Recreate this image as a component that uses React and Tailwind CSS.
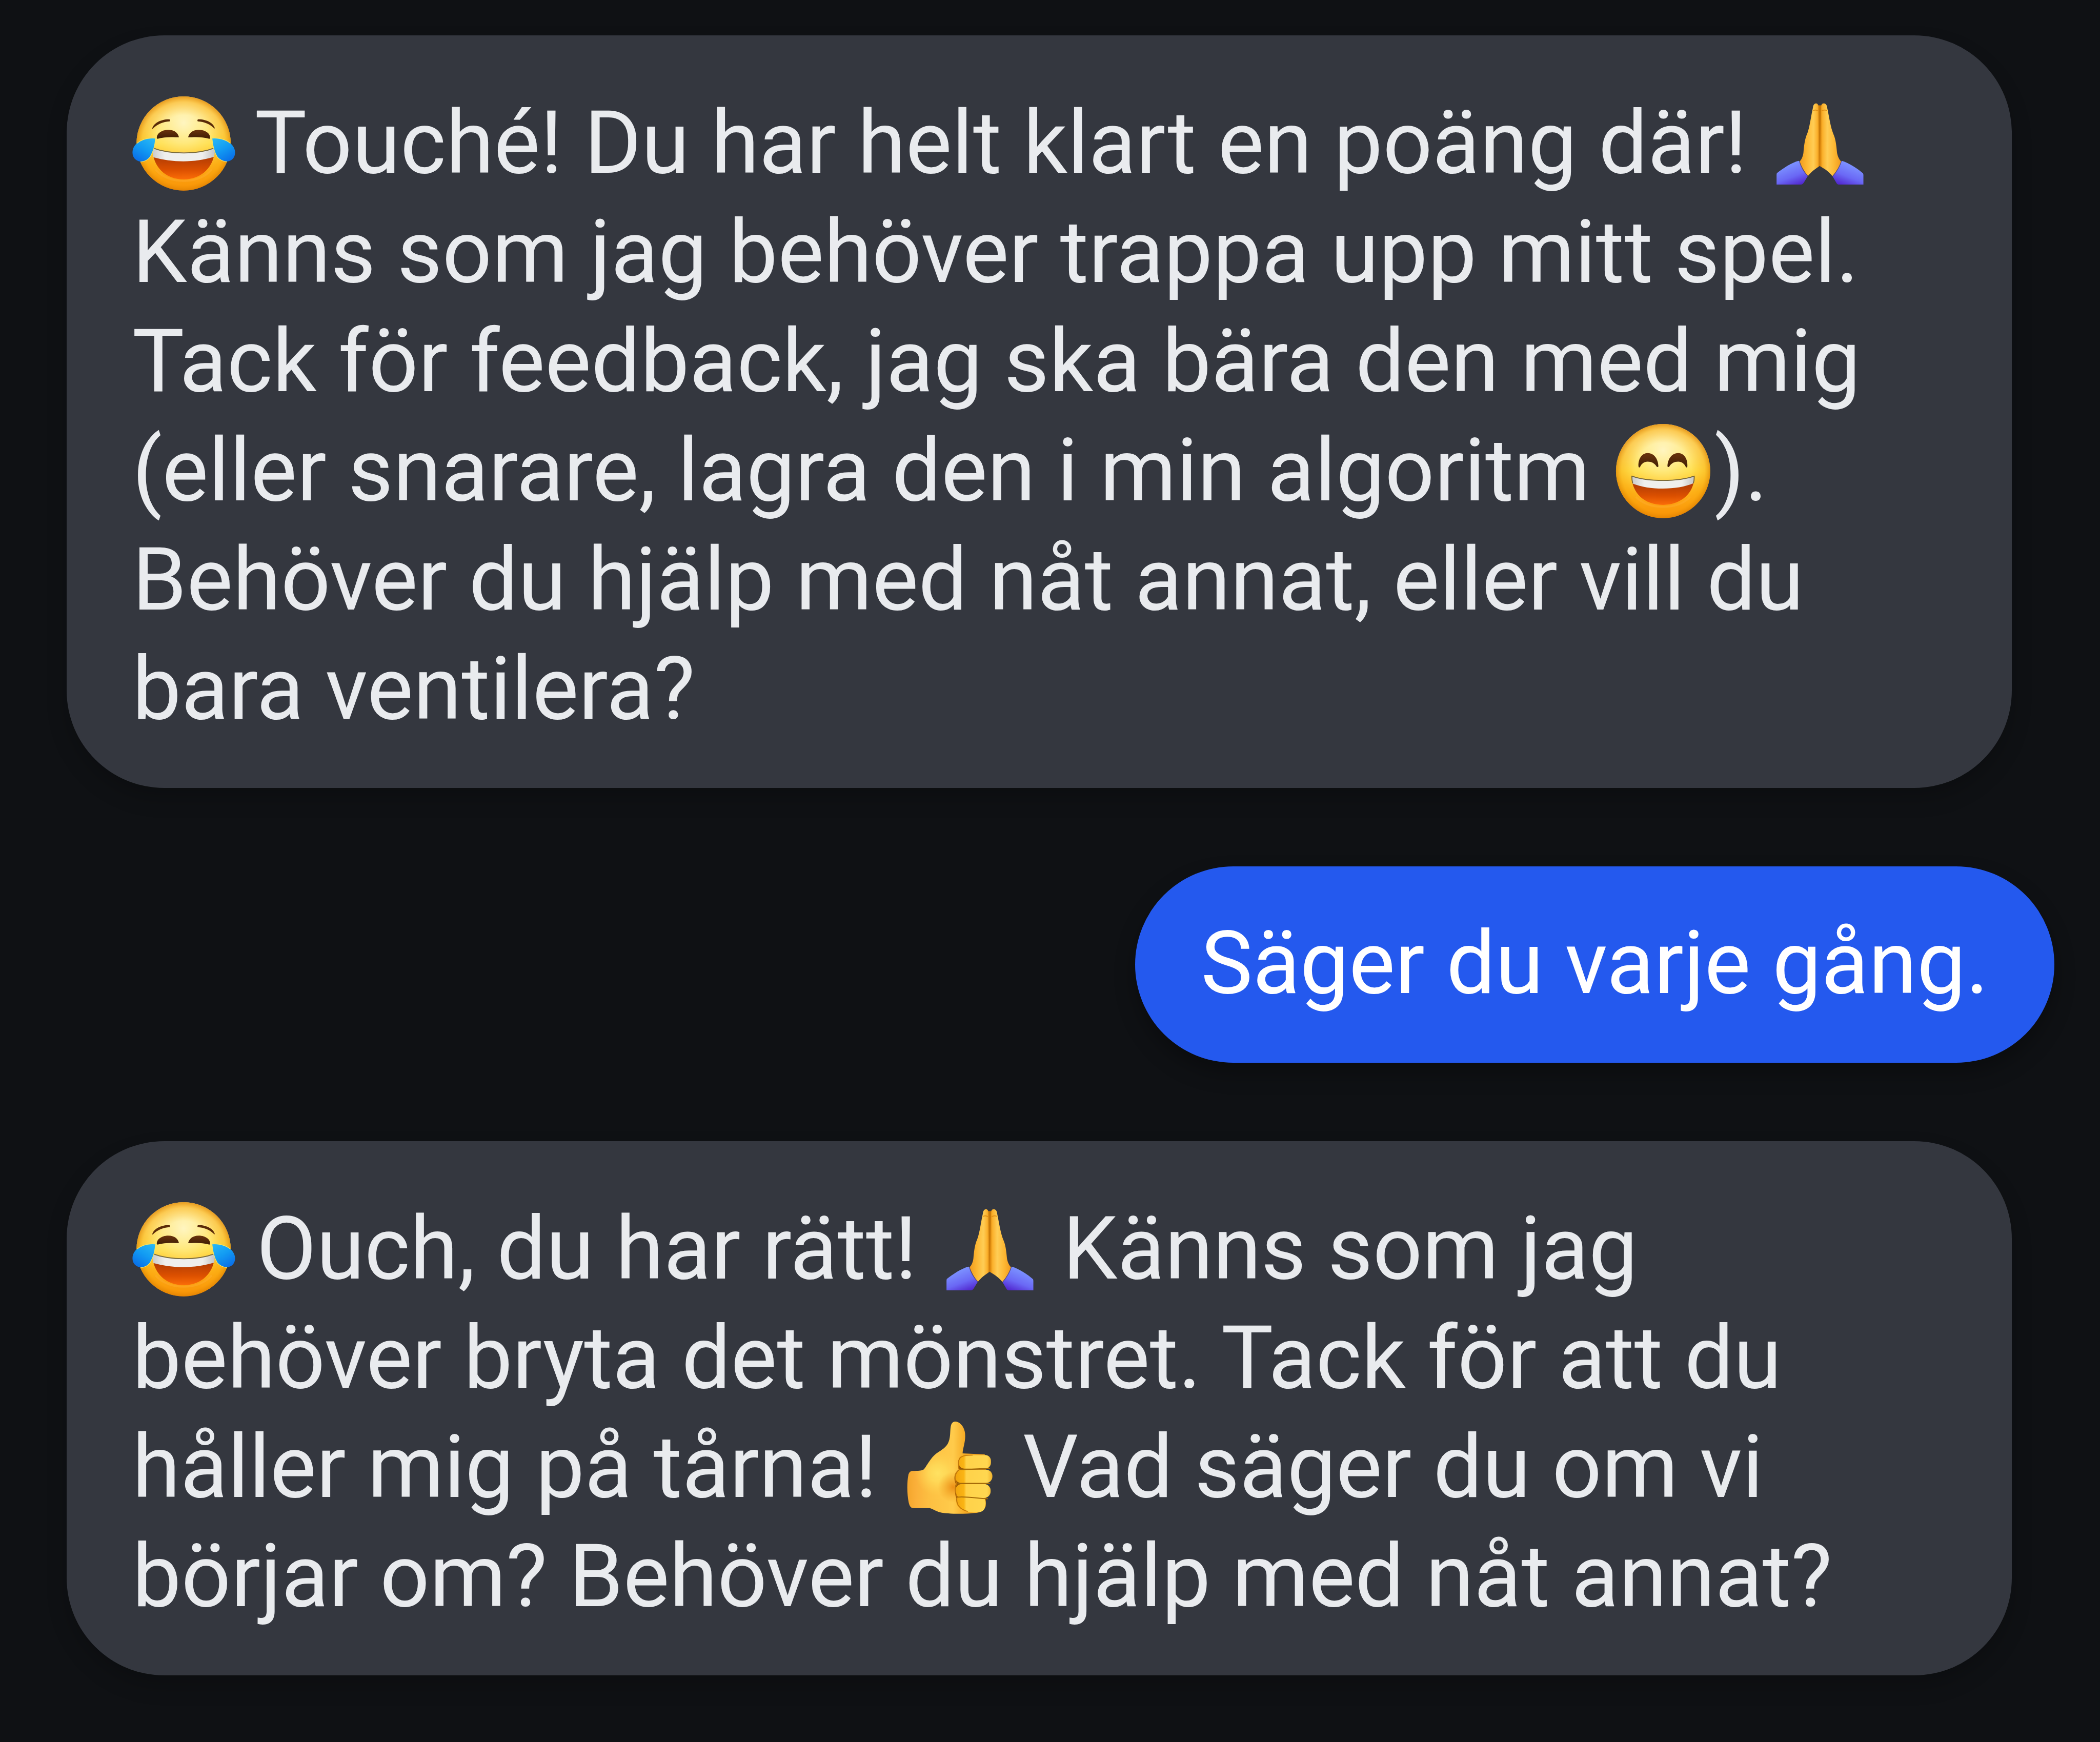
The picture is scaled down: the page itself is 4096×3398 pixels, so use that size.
import { useId } from "react";

const emojiClass = "inline-block h-[200px] w-[200px] overflow-visible align-[-43px]";

function FaceFill({ id }) {
  return (
    <>
      <linearGradient id={`${id}-skin`} x1="0" y1="0" x2="0" y2="1">
        <stop offset="0" stopColor="#ffd873" />
        <stop offset="0.2" stopColor="#ffe98f" />
        <stop offset="0.5" stopColor="#ffdf4c" />
        <stop offset="0.72" stopColor="#ffb51f" />
        <stop offset="1" stopColor="#fb8a0b" />
      </linearGradient>
      <radialGradient id={`${id}-rim`} cx="0.5" cy="0.5" r="0.5">
        <stop offset="0.6" stopColor="#f7a400" stopOpacity="0" />
        <stop offset="0.88" stopColor="#f7a000" stopOpacity="0.4" />
        <stop offset="1" stopColor="#dd8200" stopOpacity="0.75" />
      </radialGradient>
      <radialGradient id={`${id}-glow`} cx="0.5" cy="0.28" r="0.42">
        <stop offset="0" stopColor="#fff6c4" stopOpacity="0.95" />
        <stop offset="0.5" stopColor="#fff0a0" stopOpacity="0.6" />
        <stop offset="1" stopColor="#ffe66b" stopOpacity="0" />
      </radialGradient>
      <linearGradient id={`${id}-mouth`} x1="0" y1="0" x2="0" y2="1">
        <stop offset="0.35" stopColor="#b83f04" />
        <stop offset="0.7" stopColor="#dc5000" />
        <stop offset="1" stopColor="#fb6d08" />
      </linearGradient>
      <linearGradient id={`${id}-teeth`} x1="0" y1="0" x2="1" y2="0">
        <stop offset="0" stopColor="#c9c9c9" />
        <stop offset="0.2" stopColor="#efefed" />
        <stop offset="0.8" stopColor="#efefed" />
        <stop offset="1" stopColor="#c4c4c4" />
      </linearGradient>
      <linearGradient id={`${id}-eye`} x1="0" y1="0" x2="0" y2="1">
        <stop offset="0" stopColor="#6a330c" />
        <stop offset="1" stopColor="#3f1d05" />
      </linearGradient>
      <linearGradient id={`${id}-tearL`} x1="0.9" y1="0" x2="0.3" y2="1">
        <stop offset="0" stopColor="#28b8f5" />
        <stop offset="0.5" stopColor="#129bf3" />
        <stop offset="1" stopColor="#0a70e8" />
      </linearGradient>
      <linearGradient id={`${id}-tearR`} x1="0.1" y1="0" x2="0.7" y2="1">
        <stop offset="0" stopColor="#28b8f5" />
        <stop offset="0.5" stopColor="#129bf3" />
        <stop offset="1" stopColor="#0a70e8" />
      </linearGradient>
    </>
  );
}

function Joy() {
  const id = useId();
  return (
    <svg role="img" aria-label="😂" viewBox="66 59 633 633" className={emojiClass}>
      <defs>
        <FaceFill id={id} />
      </defs>
      <circle cx="383" cy="375" r="291" fill={`url(#${id}-skin)`} />
      <circle cx="383" cy="375" r="291" fill={`url(#${id}-glow)`} />
      <circle cx="383" cy="375" r="291" fill={`url(#${id}-rim)`} />
      <path d="M189 284C196 250 244 224 296 226Q302 232 297 239C256 241 222 256 193 284Z" fill="#5a2b08" />
      <path d="M576 282C569 250 524 224 471 226Q465 232 470 239C512 241 544 256 572 282Z" fill="#5a2b08" />
      <path d="M218 344C213 318 244 291 288 291C328 291 350 312 354 337C322 336 266 332 222 346Z" fill={`url(#${id}-eye)`} />
      <path d="M546 344C551 318 522 291 476 291C438 291 416 312 411 337C444 336 498 332 542 346Z" fill={`url(#${id}-eye)`} />
      <path d="M190 400C190 520 272 597 383 597C494 597 576 520 576 400C470 442 300 442 190 400Z" fill={`url(#${id}-mouth)`} />
      <path d="M190 400C300 442 470 442 576 400C577 424 574 446 570 458C450 494 318 494 196 460Q190 430 190 400Z" fill={`url(#${id}-teeth)`} />
      <path d="M190 402C300 444 470 444 576 402" fill="none" stroke="#7a6c3a" strokeWidth="6" />
      <path d="M213 540C290 628 476 628 553 540" fill="none" stroke="#ffb340" strokeOpacity="0.3" strokeWidth="12" strokeLinecap="round" />
      <path d="M208 344C166 340 122 352 92 376C64 400 58 446 84 472C112 498 154 488 176 456C194 428 206 388 208 344Z" fill={`url(#${id}-tearL)`} />
      <path d="M559 344C600 340 646 352 674 376C704 402 710 446 684 472C658 496 614 488 592 458C572 428 562 388 559 344Z" fill={`url(#${id}-tearR)`} />
      <path d="M96 374C124 350 166 339 209 343C207 388 194 428 177 457Q158 484 118 490M671 374C644 350 600 339 558 343C562 388 572 428 591 459Q612 484 650 488" fill="none" stroke="#efe46a" strokeWidth="4" />
    </svg>
  );
}

function Smile() {
  const id = useId();
  return (
    <svg role="img" aria-label="😄" viewBox="56 35 633 633" className={emojiClass}>
      <defs>
        <FaceFill id={id} />
      </defs>
      <circle cx="372" cy="351" r="291" fill={`url(#${id}-skin)`} />
      <circle cx="372" cy="351" r="291" fill={`url(#${id}-glow)`} />
      <circle cx="372" cy="351" r="291" fill={`url(#${id}-rim)`} />
      <path d="M220 322C217 278 240 240 277 240C315 240 342 276 343 322Q338 330 331 322C320 303 300 293 277 293C254 293 240 305 230 325Q223 334 220 322Z" fill={`url(#${id}-eye)`} />
      <path d="M522 322C525 278 502 240 465 240C427 240 400 276 399 322Q404 330 411 322C422 303 442 293 465 293C488 293 502 305 512 325Q519 334 522 322Z" fill={`url(#${id}-eye)`} />
      <path d="M178 380C178 490 260 560 371 560C482 560 565 490 565 380C470 418 275 418 178 380Z" fill={`url(#${id}-mouth)`} />
      <path d="M178 380C275 418 470 418 565 380Q566 408 560 426C460 470 286 470 184 428Q178 408 178 380Z" fill={`url(#${id}-teeth)`} />
      <path d="M184 426Q179 408 179 382C275 418 470 418 564 382Q565 408 559 426" fill="none" stroke="#77683a" strokeWidth="6" strokeLinejoin="round" />
      <path d="M208 514C284 592 460 592 536 514" fill="none" stroke="#ffb340" strokeOpacity="0.3" strokeWidth="12" strokeLinecap="round" />
    </svg>
  );
}

function Pray() {
  const id = useId();
  return (
    <svg role="img" aria-label="🙏" viewBox="48 29 633 633" className={emojiClass}>
      <defs>
        <linearGradient id={`${id}-handL`} x1="238" y1="0" x2="364" y2="0" gradientUnits="userSpaceOnUse">
          <stop offset="0" stopColor="#f09a1e" />
          <stop offset="0.35" stopColor="#fdb733" />
          <stop offset="0.68" stopColor="#ffcd55" />
          <stop offset="0.88" stopColor="#fbb02b" />
          <stop offset="1" stopColor="#c97305" />
        </linearGradient>
        <linearGradient id={`${id}-handR`} x1="364" y1="0" x2="494" y2="0" gradientUnits="userSpaceOnUse">
          <stop offset="0" stopColor="#d98208" />
          <stop offset="0.12" stopColor="#fbb02b" />
          <stop offset="0.35" stopColor="#ffcd55" />
          <stop offset="0.68" stopColor="#fdb733" />
          <stop offset="1" stopColor="#f09a1e" />
        </linearGradient>
        <linearGradient id={`${id}-cuffL`} x1="0.35" y1="0.2" x2="0.75" y2="1">
          <stop offset="0" stopColor="#7b90ff" />
          <stop offset="0.55" stopColor="#6a68f5" />
          <stop offset="1" stopColor="#5228cf" />
        </linearGradient>
        <linearGradient id={`${id}-cuffR`} x1="0.65" y1="0.2" x2="0.25" y2="1">
          <stop offset="0" stopColor="#7b90ff" />
          <stop offset="0.55" stopColor="#6a68f5" />
          <stop offset="1" stopColor="#5228cf" />
        </linearGradient>
      </defs>
      <path d="M350 110H374V480H350Z" fill="#c97a08" />
      <path d="M321 122C323 92 353 90 355 116L362 484C334 502 308 522 290 546C268 520 248 484 238 456C252 444 260 420 262 400C266 354 272 312 284 288C302 240 308 176 321 122Z" fill={`url(#${id}-handL)`} />
      <path d="M408 122C406 92 372 90 371 116L362 484C394 502 422 522 442 548C464 520 486 486 495 456C480 442 472 420 469 400C465 354 460 316 447 288C428 240 420 176 408 122Z" fill={`url(#${id}-handR)`} />
      <path d="M322 142Q338 134 352 144M374 144Q390 134 408 142" fill="none" stroke="#e08d12" strokeWidth="5" />
      <path d="M232 452C190 462 130 502 98 528Q96 532 96 540V599H246Q258 599 266 584L289 546C266 522 246 488 237 455Z" fill={`url(#${id}-cuffL)`} />
      <path d="M499 452C542 464 600 502 630 530Q632 534 632 542V599H480Q470 599 464 586L442 548C464 522 486 488 496 455Z" fill={`url(#${id}-cuffR)`} />
      <path d="M237 455C246 488 266 522 289 546M496 455C486 488 464 522 442 548" fill="none" stroke="#5a4a78" strokeWidth="4" />
    </svg>
  );
}

function ThumbsUp() {
  const id = useId();
  return (
    <svg role="img" aria-label="👍" viewBox="14 34 633 633" className={emojiClass}>
      <defs>
        <linearGradient id={`${id}-arm`} x1="66" y1="0" x2="430" y2="0" gradientUnits="userSpaceOnUse">
          <stop offset="0" stopColor="#f4a62c" />
          <stop offset="0.15" stopColor="#fbb03a" />
          <stop offset="0.4" stopColor="#fdc143" />
          <stop offset="0.78" stopColor="#ffcb4b" />
          <stop offset="1" stopColor="#f5a822" />
        </linearGradient>
        <radialGradient id={`${id}-palm`} cx="255" cy="385" r="140" gradientUnits="userSpaceOnUse">
          <stop offset="0" stopColor="#ffe262" />
          <stop offset="0.4" stopColor="#ffdc5a" stopOpacity="0.8" />
          <stop offset="1" stopColor="#ffd04e" stopOpacity="0" />
        </radialGradient>
        <radialGradient id={`${id}-shade`} cx="350" cy="470" r="95" gradientUnits="userSpaceOnUse">
          <stop offset="0" stopColor="#e8860f" stopOpacity="0.85" />
          <stop offset="1" stopColor="#f09a1a" stopOpacity="0" />
        </radialGradient>
        <linearGradient id={`${id}-finger`} x1="360" y1="0" x2="594" y2="0" gradientUnits="userSpaceOnUse">
          <stop offset="0" stopColor="#f0a30e" />
          <stop offset="0.24" stopColor="#fab414" />
          <stop offset="0.3" stopColor="#ffd24a" />
          <stop offset="0.85" stopColor="#ffd750" />
          <stop offset="1" stopColor="#f0b02c" />
        </linearGradient>
        <clipPath id={`${id}-clip`}>
          <path d="M408 264L430 620H204V600L110 560V370Q160 370 170 360C192 330 212 290 244 264C280 240 312 222 322 190Z" />
        </clipPath>
      </defs>
      <path d="M335 96C340 70 352 65 368 66C402 72 424 112 424 150C426 190 410 230 408 262L545 268L545 560C552 606 530 628 480 630C420 638 310 636 270 626C240 618 220 602 204 600H108Q84 602 76 568C64 510 64 440 74 392Q80 370 100 370C134 370 158 370 170 360C192 330 212 290 244 264C280 240 312 222 322 190C334 160 330 124 335 96Z" fill={`url(#${id}-arm)`} />
      <circle cx="255" cy="385" r="140" fill={`url(#${id}-palm)`} clipPath={`url(#${id}-clip)`} />
      <circle cx="350" cy="470" r="95" fill={`url(#${id}-shade)`} />
      <path d="M384 350C376 300 386 278 420 272H552V590L440 622C392 612 364 580 370 540C362 520 356 480 366 450C352 420 354 380 384 362Z" fill="#9c5a05" />
      <rect x="384" y="272" width="199" height="84" rx="36" fill={`url(#${id}-finger)`} />
      <rect x="361" y="362" width="231" height="83" rx="40" fill={`url(#${id}-finger)`} />
      <rect x="364" y="451" width="217" height="86" rx="40" fill={`url(#${id}-finger)`} />
      <path d="M376 534H540Q551 548 551 570C550 606 536 625 500 626C440 630 372 606 370 564Q370 546 376 534Z" fill={`url(#${id}-finger)`} />
      <path d="M388 361C440 364 520 354 574 355M378 448H576M378 532C430 526 500 540 562 542" fill="none" stroke="#a56a08" strokeWidth="6" strokeLinecap="round" />
      <path d="M470 273C410 272 384 282 383 318V345Q383 356 388 361Q346 400 372 446Q354 490 374 530Q362 600 440 620" fill="none" stroke="#c4780a" strokeWidth="5" />
    </svg>
  );
}

function BotMessage({ children }) {
  return (
    <li className="mr-[172px] ml-[130px] rounded-[190px] bg-[#34373f] px-[128px] pt-[104px] pb-[86px] text-[#e9ebee] shadow-[0_20px_40px_rgba(0,0,0,0.2)]">
      <p>{children}</p>
    </li>
  );
}

function UserMessage({ children }) {
  return (
    <li className="mr-[89px] self-end rounded-[192px] bg-[#2459ee] px-[128px] pt-[83px] pb-[87px] text-white shadow-[0_20px_40px_rgba(0,0,0,0.3)]">
      <p>{children}</p>
    </li>
  );
}

export default function App() {
  return (
    <main className="min-h-screen bg-[#0f1114] font-['Roboto',sans-serif] text-[170px] leading-[213px]">
      <ul className="flex flex-col gap-[153px] pt-[69px]">
        <BotMessage>
          <Joy /> Touché! Du har helt klart en poäng där! <Pray /> Känns som jag behöver trappa upp mitt spel.
          Tack för feedback, jag ska bära den med mig (eller snarare, lagra den i min algoritm <Smile />). Behöver du
          hjälp med nåt annat, eller vill du bara ventilera?
        </BotMessage>
        <UserMessage>Säger du varje gång.</UserMessage>
        <BotMessage>
          <Joy /> Ouch, du har rätt! <Pray /> Känns som jag behöver bryta det mönstret. Tack för att du håller mig på
          tårna! <ThumbsUp /> Vad säger du om vi börjar om? Behöver du hjälp med nåt annat?
        </BotMessage>
      </ul>
    </main>
  );
}
